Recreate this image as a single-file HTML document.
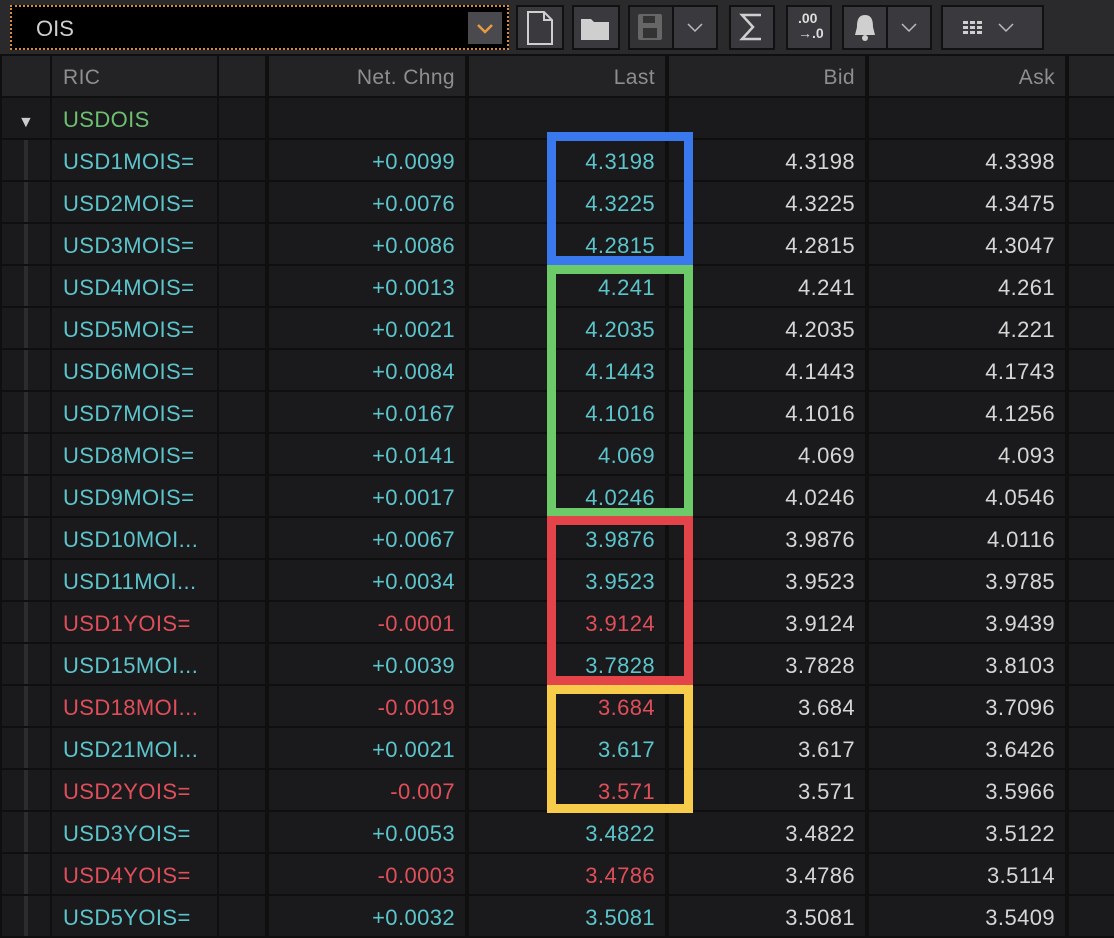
<!DOCTYPE html>
<html><head><meta charset="utf-8"><style>
*{margin:0;padding:0;box-sizing:border-box}
body{width:1114px;height:938px;background:#0f0f10;overflow:hidden;font-family:"Liberation Sans",sans-serif;position:relative}
.tb{position:absolute;left:0;top:0;width:1114px;height:54px;background:#2a2a2d}
.inp{position:absolute;left:10px;top:5px;width:499px;height:45px;background:#000;border:2px dotted #d88a3a}
.inp span{position:absolute;left:24px;top:9px;color:#cfcfcf;font-size:22px}
.dd{position:absolute;right:5px;top:5px;width:34px;height:32px;background:#4a4a4e}
.btn{position:absolute;top:5px;height:45px;background:#3a3a3e;border:2px solid #111}
.row{position:absolute;left:0;width:1114px;height:42px}
.c{position:absolute;top:0;height:40px;background:#1a1a1c;line-height:44px;font-size:22px;letter-spacing:0.4px;white-space:nowrap;overflow:hidden}
.h .c{background:#232326;color:#8e8e90;font-size:21px}
.r{text-align:right;padding-right:10px}
.cy{color:#5cc5cc}.rd{color:#e04e5a}.wh{color:#d6d6d6}.gr{color:#6cc070}
.box{position:absolute;left:547px;width:146px;border:9px solid}
</style></head><body>
<div class="tb">
<div class="inp"><span>OIS</span><div class="dd"><svg width="34" height="32"><path d="M10 13 L17 20 L24 13" stroke="#e89a40" stroke-width="2.5" fill="none"/></svg></div></div>
<div class="btn" style="left:516px;width:48px"><svg width="44" height="41"><path d="M10 5 H26 L34 13 V37 H10 Z M26 5 V13 H34" stroke="#cfcfcf" stroke-width="2" fill="none"/></svg></div>
<div class="btn" style="left:572px;width:48px"><svg width="44" height="41"><path d="M7 12 H17 L20 15 H35 V33 H7 Z" fill="#cfcfcf"/></svg></div>
<div class="btn" style="left:628px;width:46px;background:#333336"><svg width="42" height="41"><rect x="8" y="7" width="24" height="26" rx="2" fill="#666"/><rect x="13" y="9" width="12" height="7" fill="#333"/><rect x="13" y="21" width="14" height="10" fill="#333"/></svg></div>
<div class="btn" style="left:672px;width:46px"><svg width="42" height="41"><path d="M14 17 L21 24 L28 17" stroke="#bbb" stroke-width="1.5" fill="none"/></svg></div>
<div class="btn" style="left:729px;width:46px"><svg width="42" height="41"><path d="M30 8 H11 L22 20 L11 32 H30" stroke="#cfcfcf" stroke-width="2.5" fill="none"/></svg></div>
<div class="btn" style="left:786px;width:46px;color:#ddd;font-size:14px;font-weight:bold;line-height:15px;padding:4px 0 0 10px">.00<br>→.0</div>
<div class="btn" style="left:842px;width:46px"><svg width="42" height="41"><path d="M21 8 C14 8 13 14 13 20 L11 28 H31 L29 20 C29 14 28 8 21 8 Z" fill="#cfcfcf"/><circle cx="21" cy="31" r="3" fill="#cfcfcf"/></svg></div>
<div class="btn" style="left:886px;width:46px"><svg width="42" height="41"><path d="M14 17 L21 24 L28 17" stroke="#bbb" stroke-width="1.5" fill="none"/></svg></div>
<div class="btn" style="left:941px;width:103px"><svg width="99" height="41"><g fill="#cfcfcf"><rect x="20" y="14" width="5" height="3"/><rect x="27" y="14" width="5" height="3"/><rect x="34" y="14" width="5" height="3"/><rect x="20" y="19" width="5" height="3"/><rect x="27" y="19" width="5" height="3"/><rect x="34" y="19" width="5" height="3"/><rect x="20" y="24" width="5" height="3"/><rect x="27" y="24" width="5" height="3"/><rect x="34" y="24" width="5" height="3"/></g><path d="M56 17 L63 24 L70 17" stroke="#bbb" stroke-width="1.5" fill="none"/></svg></div>
</div>
<div id="g"></div>
<script>
var cols=[[2,48],[52,165],[219,46],[269,196],[469,196],[669,196],[869,196],[1069,45]];
var data=[
["USD1MOIS=","+0.0099","4.3198","4.3198","4.3398",0],
["USD2MOIS=","+0.0076","4.3225","4.3225","4.3475",0],
["USD3MOIS=","+0.0086","4.2815","4.2815","4.3047",0],
["USD4MOIS=","+0.0013","4.241","4.241","4.261",0],
["USD5MOIS=","+0.0021","4.2035","4.2035","4.221",0],
["USD6MOIS=","+0.0084","4.1443","4.1443","4.1743",0],
["USD7MOIS=","+0.0167","4.1016","4.1016","4.1256",0],
["USD8MOIS=","+0.0141","4.069","4.069","4.093",0],
["USD9MOIS=","+0.0017","4.0246","4.0246","4.0546",0],
["USD10MOI...","+0.0067","3.9876","3.9876","4.0116",0],
["USD11MOI...","+0.0034","3.9523","3.9523","3.9785",0],
["USD1YOIS=","-0.0001","3.9124","3.9124","3.9439",1],
["USD15MOI...","+0.0039","3.7828","3.7828","3.8103",0],
["USD18MOI...","-0.0019","3.684","3.684","3.7096",1],
["USD21MOI...","+0.0021","3.617","3.617","3.6426",0],
["USD2YOIS=","-0.007","3.571","3.571","3.5966",1],
["USD3YOIS=","+0.0053","3.4822","3.4822","3.5122",0],
["USD4YOIS=","-0.0003","3.4786","3.4786","3.5114",1],
["USD5YOIS=","+0.0032","3.5081","3.5081","3.5409",0]];
function cell(i,txt,cls){var c=cols[i];return '<div class="c '+(cls||'')+'" style="left:'+c[0]+'px;width:'+c[1]+'px">'+(txt||'')+'</div>';}
var h='<div class="row h" style="top:56px">'+cell(0)+'<div class="c" style="left:52px;width:165px;padding-left:11px">RIC</div>'+cell(2)+cell(3,'Net. Chng','r')+cell(4,'Last','r')+cell(5,'Bid','r')+cell(6,'Ask','r')+cell(7)+'</div>';
h+='<div class="row" style="top:98px">'+cell(0,'<span style="color:#ccc;font-size:16px;padding-left:16px">▼</span>')+'<div class="c gr" style="left:52px;width:165px;padding-left:11px">USDOIS</div>'+cell(2)+cell(3)+cell(4)+cell(5)+cell(6)+cell(7)+'</div>';
data.forEach(function(d,k){var t=140+42*k;var cl=d[5]?'rd':'cy';
h+='<div class="row" style="top:'+t+'px">'+'<div class="c" style="left:2px;width:48px"><div style="position:absolute;left:22px;top:0;width:4px;height:42px;background:#2c2c2e"></div></div>'+'<div class="c '+cl+'" style="left:52px;width:165px;padding-left:11px">'+d[0]+'</div>'+cell(2)+cell(3,d[1],'r '+cl)+cell(4,d[2],'r '+cl)+cell(5,d[3],'r wh')+cell(6,d[4],'r wh')+cell(7)+'</div>';});
h+='<div class="box" style="top:132px;height:133px;border-color:#3a78ee"></div>';
h+='<div class="box" style="top:265px;height:252px;border-color:#6ccb68"></div>';
h+='<div class="box" style="top:516px;height:169px;border-color:#e2444a"></div>';
h+='<div class="box" style="top:685px;height:128px;border-color:#f6cc4a"></div>';
document.getElementById('g').innerHTML=h;
</script>
</body></html>
